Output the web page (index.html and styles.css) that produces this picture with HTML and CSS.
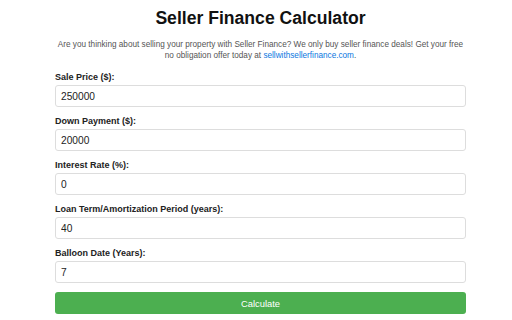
FILE: index.html
```html
<!DOCTYPE html>
<html lang="en">
<head>
    <meta charset="UTF-8">
    <meta name="viewport" content="width=device-width, initial-scale=1.0">
    <title>Seller Finance Calculator</title>
    <link rel="stylesheet" href="styles.css">
</head>
<body>
    <div class="container">
        <h1>Seller Finance Calculator</h1>
        <p class="intro">Are you thinking about selling your property with Seller Finance? We only buy seller finance deals! Get your free no obligation offer today at <a href="#">sellwithsellerfinance.com</a>.</p>

        <form class="calc-form" onsubmit="return false;">
            <label for="sale-price">Sale Price ($):</label>
            <input type="number" id="sale-price" value="250000">

            <label for="down-payment">Down Payment ($):</label>
            <input type="number" id="down-payment" value="20000">

            <label for="interest-rate">Interest Rate (%):</label>
            <input type="number" id="interest-rate" value="0">

            <label for="loan-term">Loan Term/Amortization Period (years):</label>
            <input type="number" id="loan-term" value="40">

            <label for="balloon">Balloon Date (Years):</label>
            <input type="number" id="balloon" value="7">

            <button type="submit" class="calc-btn">Calculate</button>
        </form>
    </div>
</body>
</html>
```

FILE: styles.css
```css
body {
    font-family: "Liberation Sans", Arial, sans-serif;
    margin: 0;
    background: #fff;
    color: #333;
}
.container {
    width: 411px;
    margin-left: 55px;
}
h1 {
    font-size: 17.6px;
    line-height: 22px;
    text-align: center;
    color: #111;
    margin: 7px 0 0 0;
}
.intro {
    font-size: 8.2px;
    line-height: 11px;
    color: #555;
    text-align: center;
    margin: 10px 0 11px 0;
}
.intro a {
    color: #0b76e0;
    text-decoration: none;
}
.calc-form {
    display: flex;
    flex-direction: column;
}
label {
    display: block;
    font-size: 9px;
    line-height: 11px;
    font-weight: bold;
    color: #222;
    margin-bottom: 2px;
}
input {
    box-sizing: border-box;
    height: 22px;
    width: 100%;
    padding: 0 5px;
    margin: 0 0 9px 0;
    border: 1px solid #ddd;
    border-radius: 3px;
    font-family: "Liberation Sans", Arial, sans-serif;
    font-size: 10.2px;
    color: #222;
    -moz-appearance: textfield;
}
input::-webkit-outer-spin-button,
input::-webkit-inner-spin-button {
    -webkit-appearance: none;
    margin: 0;
}
.calc-btn {
    height: 22px;
    width: 100%;
    border: none;
    border-radius: 3px;
    background-color: #4caf50;
    color: white;
    font-family: "Liberation Sans", Arial, sans-serif;
    font-size: 9.4px;
    cursor: pointer;
}
.calc-btn:hover {
    opacity: 0.8;
}
```
